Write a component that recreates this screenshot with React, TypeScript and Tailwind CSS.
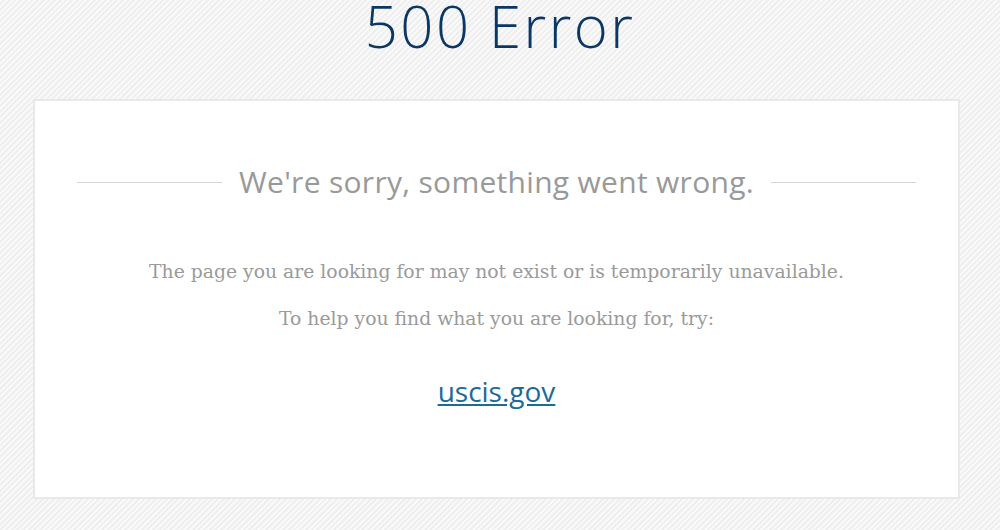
import React from 'react';

const App = () => {
  return (
    <div className="h-[530px] w-[1000px] overflow-hidden bg-[#f7f7f7] bg-[repeating-linear-gradient(135deg,#f9f9f9_0px,#f9f9f9_2px,#efefef_2px,#efefef_4px)]">
      {/* Title */}
      <h1 className="h-[99px] text-center font-['Open_Sans',sans-serif] text-[58px] font-light leading-[51px] tracking-[2.5px] text-[#0b3766]">
        500 Error
      </h1>

      {/* Card */}
      <div className="ml-[33px] h-[400px] w-[927px] border-2 border-[#e9e9e9] bg-white px-[42px]">
        <div className="mt-[64px] flex items-center gap-[17px]">
          <div className="h-px flex-1 bg-[#d4d4d4]" />
          <h2 className="font-['Open_Sans',sans-serif] text-[30px] font-normal leading-[34px] tracking-[0.3px] text-[#999999]">
            We're sorry, something went wrong.
          </h2>
          <div className="h-px flex-1 bg-[#d4d4d4]" />
        </div>

        <div className="mt-[49px] text-center font-['DejaVu_Serif',serif] text-[18.8px] leading-[47px] text-[#9a9a9a]">
          <p>The page you are looking for may not exist or is temporarily unavailable.</p>
          <p>To help you find what you are looking for, try:</p>
        </div>

        <div className="mt-[28px] text-center">
          <a href="#" className="font-['Open_Sans',sans-serif] text-[28px] text-[#1d6a9a] underline">
            uscis.gov
          </a>
        </div>
      </div>
    </div>
  );
};

export default App;
